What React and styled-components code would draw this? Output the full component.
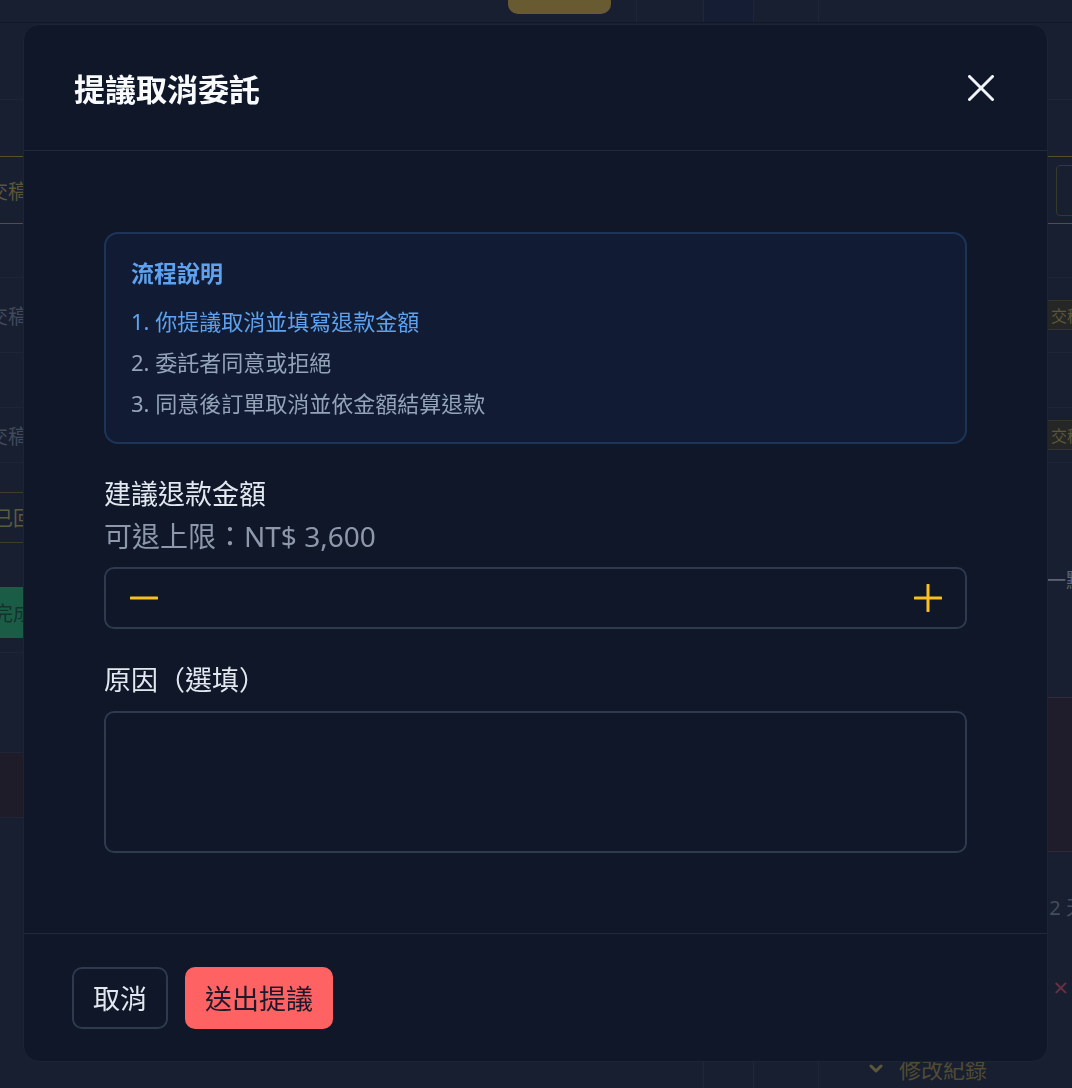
import styled, { createGlobalStyle } from "styled-components";

const GlobalStyle = createGlobalStyle`
  * { box-sizing: border-box; }
  html, body {
    margin: 0;
    padding: 0;
    background: #1b2335;
    font-family: "Noto Sans", "Noto Sans CJK TC", sans-serif;
  }
`;

/* ---------- page behind the dialog ---------- */

const Page = styled.div`
  height: 1088px;
  overflow: hidden;
  background: #1b2335;
  display: flex;
  flex-direction: column;
`;

const TopBar = styled.div`
  height: 23px;
  flex-shrink: 0;
  display: flex;
  border-bottom: 1px solid #141b2b;
  background: #1a2336;
`;

const Spacer = styled.div`
  width: ${(p) => p.$w}px;
  flex-shrink: 0;
`;

const AmberTab = styled.div`
  width: 103px;
  height: 14px;
  background: #7a6935;
  border-radius: 0 0 10px 10px;
`;

const Cell = styled.div`
  width: ${(p) => p.$w}px;
  flex-shrink: 0;
  border-left: 1px solid #232c40;
  background: ${(p) => (p.$dark ? "#18203a" : "transparent")};
`;

const Columns = styled.div`
  flex: 1;
  display: flex;
  justify-content: space-between;
`;

const SideColumn = styled.div`
  width: 300px;
  display: flex;
  flex-direction: column;
`;

const SideRow = styled.div`
  height: ${(p) => p.$h}px;
  flex-shrink: 0;
  display: flex;
  align-items: center;
  justify-content: ${(p) => (p.$end ? "flex-end" : "flex-start")};
  border-bottom: 1px solid ${(p) => (p.$amber ? "#6a5a2b" : p.$line ? "#212a3d" : "transparent")};
  background: ${(p) => p.$bg || "transparent"};
  color: #4b5566;
  font-size: 20px;
`;

const EdgeText = styled.span`
  margin-left: ${(p) => (p.$end ? "0" : "-12px")};
  margin-right: ${(p) => (p.$end ? `${p.$offset ?? -14}px` : "0")};
  color: ${(p) => p.$color || "#4b5566"};
  font-size: ${(p) => p.$size || 20}px;
`;

const EdgeTag = styled.span`
  margin-left: ${(p) => (p.$end ? "0" : "-14px")};
  margin-right: ${(p) => (p.$end ? "-18px" : "0")};
  padding: ${(p) => (p.$tall ? "10px 6px" : "2px 6px")};
  font-size: ${(p) => (p.$tall ? "20px" : "16px")};
  border-radius: 4px;
  border: 1px solid ${(p) => p.$border || "transparent"};
  background: ${(p) => p.$bg || "transparent"};
  color: ${(p) => p.$color || "#6d6440"};
`;

const RedPanel = styled.div`
  height: 155px;
  flex-shrink: 0;
  margin-left: 58px;
  margin-right: -10px;
  border: 1px solid #3a2d3c;
  background: #241f2e;
`;

const BottomBar = styled.div`
  height: 38px;
  flex-shrink: 0;
  display: flex;
  align-items: flex-start;
`;

const BottomCell = styled.div`
  width: ${(p) => p.$w}px;
  height: 100%;
  flex-shrink: 0;
  border-left: 1px solid #232c40;
`;

const HistoryToggle = styled.div`
  display: flex;
  align-items: center;
  gap: 16px;
  padding-left: 50px;
  padding-top: 8px;
  color: #5e5638;
  font-size: 22px;
  line-height: 1;
`;

/* ---------- dialog ---------- */

const Overlay = styled.div`
  position: fixed;
  inset: 0;
  background: rgba(8, 12, 24, 0.15);
  display: flex;
  justify-content: center;
  align-items: flex-start;
  padding-top: 24px;
`;

const Dialog = styled.div`
  width: 1025px;
  margin-right: 1px;
  background: #0f1729;
  border: 1px solid #1c2538;
  border-radius: 16px;
  display: flex;
  flex-direction: column;
  overflow: hidden;
`;

const Header = styled.div`
  height: 126px;
  padding: 0 50px;
  display: flex;
  align-items: center;
  justify-content: space-between;
  border-bottom: 1px solid #1f2a3c;
`;

const Title = styled.h2`
  margin: 0;
  font-size: 31px;
  font-weight: 700;
  color: #f8fafc;
`;

const CloseButton = styled.button`
  width: 32px;
  height: 32px;
  padding: 0;
  border: none;
  background: none;
  display: flex;
  align-items: center;
  justify-content: center;
  cursor: pointer;
`;

const Body = styled.div`
  padding: 81px 80px 80px;
  display: flex;
  flex-direction: column;
`;

const InfoBox = styled.div`
  background: #111c34;
  border: 2px solid #1d3458;
  border-radius: 14px;
  padding: 23px 25px 23px;
`;

const InfoTitle = styled.div`
  font-size: 23px;
  font-weight: 700;
  line-height: 32px;
  color: #5ea2ef;
  margin-bottom: 16px;
`;

const Steps = styled.ol`
  margin: 0;
  padding: 0;
  list-style: none;
  display: flex;
  flex-direction: column;
  gap: 9px;
`;

const Step = styled.li`
  font-size: 22px;
  line-height: 32px;
  color: ${(p) => (p.$active ? "#5ea2ef" : "#94a3b8")};
`;

const Label = styled.div`
  margin-top: ${(p) => p.$top}px;
  font-size: 27px;
  line-height: 36px;
  color: #e2e8f0;
`;

const SubLabel = styled.div`
  margin-top: 6px;
  font-size: 28px;
  line-height: 36px;
  color: #8d99ab;
`;

const Stepper = styled.div`
  margin-top: 13px;
  height: 62px;
  border: 2px solid #2e3a4d;
  border-radius: 10px;
  display: flex;
  align-items: center;
  justify-content: space-between;
  padding: 0 22px 0 23px;
`;

const StepButton = styled.button`
  width: 30px;
  height: 30px;
  padding: 0;
  border: none;
  background: none;
  display: flex;
  align-items: center;
  justify-content: center;
  cursor: pointer;
`;

const AmountInput = styled.input`
  flex: 1;
  height: 100%;
  border: none;
  background: transparent;
  outline: none;
  color: #e2e8f0;
  font-size: 24px;
  text-align: center;
  font-family: inherit;
`;

const TextArea = styled.textarea`
  margin-top: 13px;
  height: 142px;
  border: 2px solid #2e3a4d;
  border-radius: 10px;
  background: transparent;
  resize: none;
  outline: none;
  color: #e2e8f0;
  font-size: 22px;
  font-family: inherit;
  padding: 14px 18px;
`;

const Footer = styled.div`
  border-top: 1px solid #1f2a3c;
  height: 128px;
  padding: 0 48px;
  display: flex;
  align-items: center;
  gap: 17px;
`;

const Button = styled.button`
  height: 62px;
  padding: 0 ${(p) => p.$px}px;
  border-radius: 10px;
  font-size: 27px;
  font-family: inherit;
  cursor: pointer;
  border: ${(p) => (p.$primary ? "none" : "2px solid #2e3a4d")};
  background: ${(p) => (p.$primary ? "#fe6262" : "transparent")};
  color: ${(p) => (p.$primary ? "#1c1a2b" : "#e2e8f0")};
`;

const CloseIcon = () => (
  <svg width="26" height="26" viewBox="0 0 26 26" fill="none">
    <path d="M1.5 1.5L24.5 24.5M24.5 1.5L1.5 24.5" stroke="#f1f5f9" strokeWidth="3" strokeLinecap="round" />
  </svg>
);

const MinusIcon = () => (
  <svg width="28" height="28" viewBox="0 0 28 28" fill="none">
    <path d="M1 14H27" stroke="#fbbf24" strokeWidth="3" strokeLinecap="round" />
  </svg>
);

const PlusIcon = () => (
  <svg width="28" height="28" viewBox="0 0 28 28" fill="none">
    <path d="M1 14H27M14 1V27" stroke="#fbbf24" strokeWidth="3" strokeLinecap="round" />
  </svg>
);

const ChevronIcon = () => (
  <svg width="14" height="10" viewBox="0 0 14 10" fill="none">
    <path d="M2 2L7 7L12 2" stroke="#6d6440" strokeWidth="3" strokeLinecap="round" strokeLinejoin="round" />
  </svg>
);

function Backdrop() {
  return (
    <Page>
      <TopBar>
        <Spacer $w={508} />
        <AmberTab />
        <Spacer $w={25} />
        <Cell $w={67} />
        <Cell $w={50} $dark />
        <Cell $w={65} />
        <Cell $w={230} />
      </TopBar>
      <Columns>
        <SideColumn>
          <SideRow $h={77} $line />
          <SideRow $h={57} $amber />
          <SideRow $h={67} $amber>
            <EdgeText $color="#6b6240">交稿</EdgeText>
          </SideRow>
          <SideRow $h={54} $line />
          <SideRow $h={75} $line>
            <EdgeText>交稿</EdgeText>
          </SideRow>
          <SideRow $h={55} $line />
          <SideRow $h={55} $line>
            <EdgeText>交稿</EdgeText>
          </SideRow>
          <SideRow $h={110}>
            <EdgeTag $tall $border="#4a4530" $color="#6b6a40">已回</EdgeTag>
          </SideRow>
          <SideRow $h={80} $line>
            <EdgeTag $tall $bg="#1f6a4e" $color="#173a30">完成</EdgeTag>
          </SideRow>
          <SideRow $h={100} $line />
          <SideRow $h={65} $line $bg="#231f2c" />
        </SideColumn>
        <SideColumn>
          <SideRow $h={77} $line />
          <SideRow $h={57} $amber />
          <SideRow $h={67} $amber $end>
            <EdgeTag $end $tall $border="#3d4230" $color="#6b6240">　</EdgeTag>
          </SideRow>
          <SideRow $h={54} $line />
          <SideRow $h={75} $line $end>
            <EdgeTag $end $bg="#2a2c28" $border="#3c3d30">交稿</EdgeTag>
          </SideRow>
          <SideRow $h={55} $line />
          <SideRow $h={55} $line $end>
            <EdgeTag $end $bg="#2a2c28" $border="#3c3d30">交稿</EdgeTag>
          </SideRow>
          <SideRow $h={234} $end>
            <EdgeText $end $color="#6b7585">一點</EdgeText>
          </SideRow>
          <RedPanel />
          <SideRow $h={110} $end>
            <EdgeText $end $color="#4f5869">2 天</EdgeText>
          </SideRow>
          <SideRow $h={50} $end>
            <EdgeText $end $offset={4} $color="#7a3848" $size={26}>×</EdgeText>
          </SideRow>
        </SideColumn>
      </Columns>
      <BottomBar>
        <Spacer $w={703} />
        <BottomCell $w={50} />
        <BottomCell $w={65} />
        <BottomCell $w={254}>
          <HistoryToggle>
            <ChevronIcon />
            修改紀錄
          </HistoryToggle>
        </BottomCell>
      </BottomBar>
    </Page>
  );
}

export default function App() {
  return (
    <>
      <GlobalStyle />
      <Backdrop />
      <Overlay>
        <Dialog>
          <Header>
            <Title>提議取消委託</Title>
            <CloseButton aria-label="關閉">
              <CloseIcon />
            </CloseButton>
          </Header>
          <Body>
            <InfoBox>
              <InfoTitle>流程說明</InfoTitle>
              <Steps>
                <Step $active>1. 你提議取消並填寫退款金額</Step>
                <Step>2. 委託者同意或拒絕</Step>
                <Step>3. 同意後訂單取消並依金額結算退款</Step>
              </Steps>
            </InfoBox>
            <Label $top={32}>建議退款金額</Label>
            <SubLabel>可退上限：NT$ 3,600</SubLabel>
            <Stepper>
              <StepButton aria-label="減少">
                <MinusIcon />
              </StepButton>
              <AmountInput type="text" defaultValue="" />
              <StepButton aria-label="增加">
                <PlusIcon />
              </StepButton>
            </Stepper>
            <Label $top={33}>原因（選填）</Label>
            <TextArea />
          </Body>
          <Footer>
            <Button $px={19}>取消</Button>
            <Button $primary $px={20}>送出提議</Button>
          </Footer>
        </Dialog>
      </Overlay>
    </>
  );
}
